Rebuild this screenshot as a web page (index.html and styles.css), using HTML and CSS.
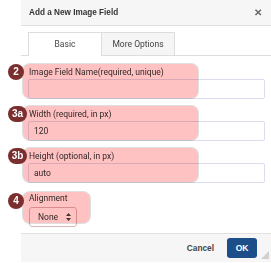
FILE: index.html
```html
<!DOCTYPE html>
<html lang="en">
<head>
    <meta charset="UTF-8">
    <title>Add a New Image Field</title>
    <link rel="stylesheet" href="styles.css">
</head>
<body>
    <div class="dialog">
        <div class="header">
            <span class="title">Add a New Image Field</span>
            <span class="close">&#x2715;</span>
        </div>

        <div class="tabs">
            <div class="tab active">Basic</div>
            <div class="tab">More Options</div>
        </div>

        <div class="content">
            <div class="field">
                <label>Image Field Name(required, unique)</label>
                <input type="text" class="text-input" value="">
                <div class="mark mark-wide"></div>
                <span class="badge">2</span>
            </div>

            <div class="field">
                <label>Width (required, in px)</label>
                <input type="text" class="text-input" value="120">
                <div class="mark mark-wide"></div>
                <span class="badge pill">3a</span>
            </div>

            <div class="field">
                <label>Height (optional, in px)</label>
                <input type="text" class="text-input" value="auto">
                <div class="mark mark-wide"></div>
                <span class="badge pill">3b</span>
            </div>

            <div class="field field-last">
                <label>Alignment</label>
                <div class="select">
                    <span>None</span>
                    <svg class="arrows" width="5" height="8" viewBox="0 0 5 8">
                        <path d="M2.5 0 L5 3 L0 3 Z M0 5 L5 5 L2.5 8 Z" fill="#444"/>
                    </svg>
                </div>
                <div class="mark mark-small"></div>
                <span class="badge badge-low">4</span>
            </div>
        </div>

        <div class="footer">
            <span class="cancel">Cancel</span>
            <span class="ok">OK</span>
            <svg class="grip" width="8" height="8" viewBox="0 0 8 8">
                <path d="M8 0 L8 8 L0 8 Z" fill="#d0d0d0"/>
            </svg>
        </div>
    </div>
</body>
</html>
```

FILE: styles.css
```css
body {
    margin: 0;
    width: 271px;
    height: 263px;
    overflow: hidden;
    background-color: #fff;
    font-family: Roboto, "Liberation Sans", sans-serif;
    color: #333;
}
.dialog {
    margin-left: 21px;
    width: 250px;
    position: relative;
}
.header {
    height: 26px;
    background-color: #f6f6f6;
    border-bottom: 1px solid #e0e0e0;
    display: flex;
    align-items: center;
    justify-content: space-between;
    padding: 0 9px 0 8px;
    box-sizing: border-box;
}
.title {
    font-family: "Liberation Sans", Arial, sans-serif;
    font-weight: bold;
    font-size: 8.2px;
    color: #333;
}
.close {
    font-size: 10px;
    color: #666;
    font-weight: bold;
}
.tabs {
    display: flex;
    margin-top: 6px;
    padding-left: 7px;
    border-bottom: 1px solid #ddd;
}
.tab {
    width: 72px;
    height: 22px;
    line-height: 22px;
    text-align: center;
    font-size: 8.5px;
    color: #444;
    background-color: #f5f5f5;
    border: 1px solid #ddd;
    border-bottom: none;
    margin-bottom: -1px;
}
.tab.active {
    background-color: #fff;
    height: 23px;
    border-right: none;
}
.content {
    padding: 10px 6px 0 7px;
}
.field {
    position: relative;
    margin-bottom: 9px;
}
.field label {
    display: block;
    height: 13px;
    line-height: 13px;
    font-size: 8.5px;
    color: #333;
    padding-left: 1px;
}
.text-input {
    display: block;
    box-sizing: border-box;
    width: 237px;
    height: 20px;
    margin: 0;
    padding: 0 0 0 5px;
    border: 1px solid #dcdcef;
    border-radius: 2px;
    font-family: Roboto, "Liberation Sans", sans-serif;
    font-size: 8.5px;
    color: #333;
    background: #fff;
}
.select {
    display: inline-flex;
    align-items: center;
    gap: 8px;
    height: 20px;
    box-sizing: border-box;
    margin-left: 1px;
    padding: 0 5px 0 8px;
    border: 1px solid #d8b8b8;
    border-radius: 3px;
    font-size: 8.5px;
    color: #333;
}
.field-last {
    margin-bottom: 0;
    height: 32px;
}
.mark {
    position: absolute;
    left: -5px;
    top: -2px;
    height: 34px;
    background-color: #ffc2c2;
    mix-blend-mode: multiply;
    border-radius: 7px;
    box-shadow: 0 0 0 1px rgba(150, 150, 150, 0.3);
}
.mark-wide {
    width: 175px;
}
.mark-small {
    width: 67px;
    top: 0;
    height: 31px;
}
.badge {
    position: absolute;
    left: -20px;
    top: -2px;
    width: 16px;
    height: 16px;
    border-radius: 8px;
    background-color: #7a2e2e;
    color: #fff;
    font-family: "Liberation Sans", Arial, sans-serif;
    font-weight: bold;
    font-size: 10px;
    line-height: 16px;
    text-align: center;
}
.badge.pill {
    width: 19px;
}
.badge-low {
    top: 1px;
}
.footer {
    margin-top: 9px;
    height: 28px;
    background-color: #f6f6f6;
    border-top: 1px solid #e0e0e0;
    display: flex;
    align-items: center;
    justify-content: flex-end;
    padding-right: 14px;
    position: relative;
}
.cancel {
    font-family: "Liberation Sans", Arial, sans-serif;
    font-weight: bold;
    font-size: 8.3px;
    color: #444;
    margin-right: 13px;
}
.ok {
    width: 30px;
    height: 20px;
    line-height: 20px;
    text-align: center;
    background-color: #1c4f8a;
    color: #fff;
    font-family: "Liberation Sans", Arial, sans-serif;
    font-weight: bold;
    font-size: 8.5px;
    border-radius: 3px;
}
.grip {
    position: absolute;
    right: 2px;
    bottom: 3px;
}
```
